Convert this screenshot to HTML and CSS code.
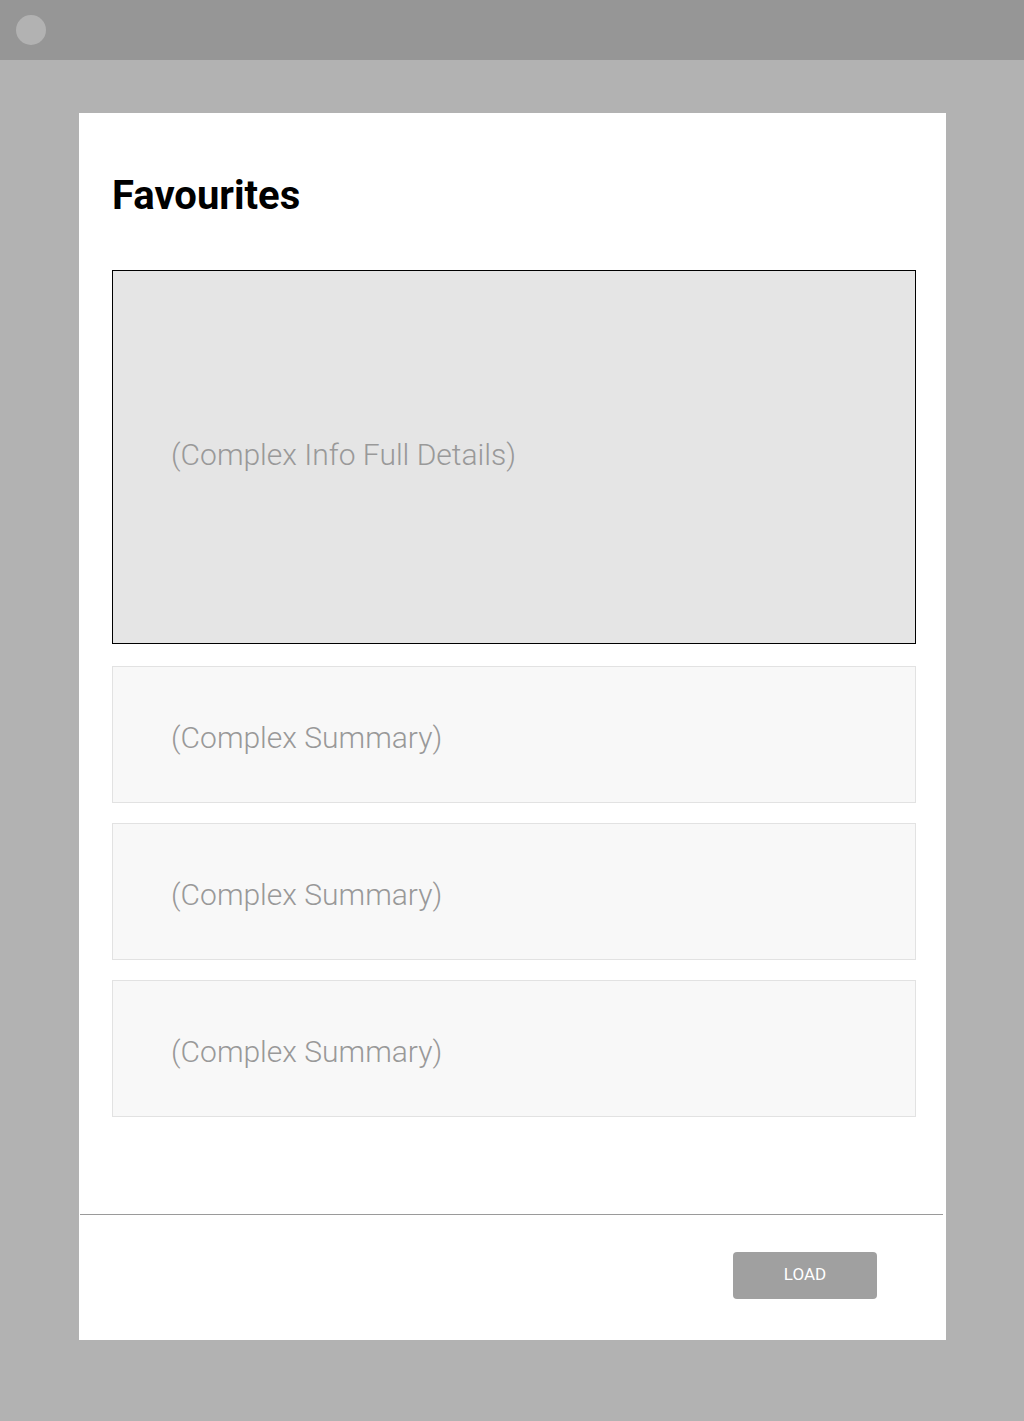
FILE: index.html
```html
<!DOCTYPE html>
<html>
<head>
<meta charset="utf-8">
<link rel="stylesheet" href="styles.css">
</head>
<body>
<div class="topbar"><span class="dot"></span></div>
<main class="card">
  <div class="content">
    <h1 class="title">Favourites</h1>
    <div class="list">
      <div class="item item-full">(Complex Info Full Details)</div>
      <div class="item item-summary">(Complex Summary)</div>
      <div class="item item-summary">(Complex Summary)</div>
      <div class="item item-summary">(Complex Summary)</div>
    </div>
  </div>
  <div class="divider"></div>
  <div class="footer">
    <button class="btn">LOAD</button>
  </div>
</main>
</body>
</html>
```
FILE: styles.css
```css
html, body {
  margin: 0;
  padding: 0;
}
body {
  background: #b2b2b2;
  font-family: Roboto, "Liberation Sans", sans-serif;
  height: 1421px;
}
.topbar {
  height: 60px;
  background: #969696;
  display: flex;
  align-items: center;
  padding-left: 16px;
}
.dot {
  width: 30px;
  height: 30px;
  border-radius: 50%;
  background: #b2b2b2;
}
.card {
  margin: 53px 0 0 79px;
  width: 867px;
  height: 1227px;
  background: #fff;
  display: flex;
  flex-direction: column;
}
.content {
  padding: 0 30px 0 33px;
  flex: 1;
}
.title {
  margin: 0;
  padding-top: 59px;
  font-size: 40px;
  line-height: 48px;
  font-weight: 700;
  color: #000;
}
.list {
  margin-top: 50px;
  display: flex;
  flex-direction: column;
  gap: 20px;
}
.item {
  box-sizing: border-box;
  display: flex;
  align-items: center;
  padding-left: 58px;
  font-size: 30px;
  font-weight: 300;
  color: #999;
}
.item-full {
  height: 374px;
  background: #e5e5e5;
  border: 1px solid #000;
  margin-bottom: 2px;
  padding-bottom: 5px;
}
.item-summary {
  height: 137px;
  background: #f8f8f8;
  border: 1px solid #e2e2e2;
  padding-top: 6px;
}
.divider {
  height: 1px;
  background: #9a9a9a;
  margin: 0 3px 0 1px;
}
.footer {
  display: flex;
  justify-content: flex-end;
  padding: 37px 69px 41px 0;
}
.btn {
  width: 144px;
  height: 47px;
  border: none;
  border-radius: 4px;
  background: #a0a0a0;
  color: #fff;
  font-family: Roboto, "Liberation Sans", sans-serif;
  font-size: 17px;
  font-weight: 400;
  padding: 0 0 3px;
}
```
